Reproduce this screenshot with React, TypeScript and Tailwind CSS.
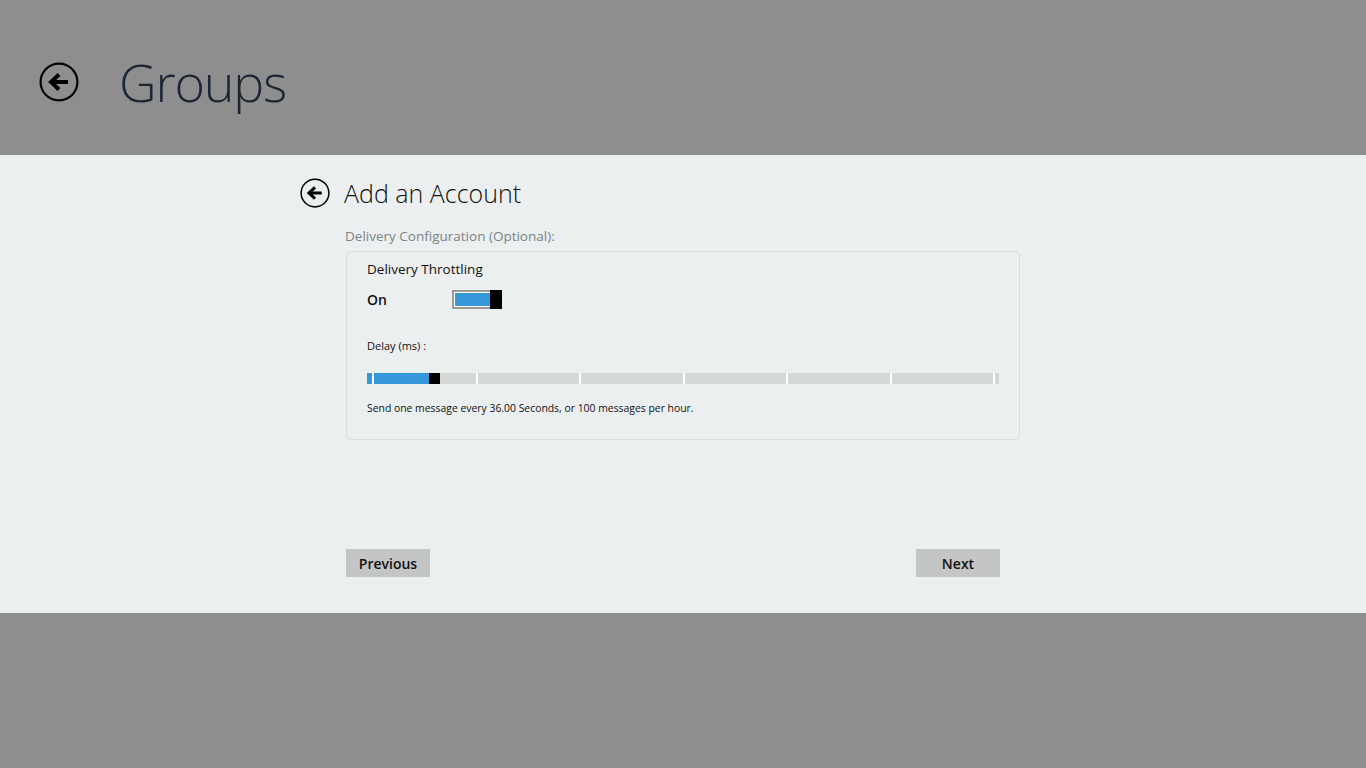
import React from "react";

function BackIcon({ size, stroke }: { size: number; stroke: number }) {
  return (
    <svg width={size} height={size} viewBox="0 0 40 40">
      <circle cx="20" cy="20" r={20 - stroke / 2 - 0.5} fill="none" stroke="#000" strokeWidth={stroke} />
      <path d="M29 20 H13" stroke="#000" strokeWidth="4" fill="none" />
      <path d="M20 12.5 L12 20 L20 27.5" stroke="#000" strokeWidth="4" fill="none" strokeLinejoin="miter" />
    </svg>
  );
}

export default function App() {
  const ticks = [5, 109, 212, 316, 419, 523, 626];
  return (
    <div className="w-[1366px] h-[768px] bg-[#8e8e8e] flex flex-col" style={{ fontFamily: '"Open Sans", "Noto Sans", sans-serif' }}>
      <div className="h-[155px] flex items-start pt-[62px] pl-[39px]">
        <BackIcon size={40} stroke={2.2} />
        <div className="ml-[40px] -mt-[16px] text-[52px] font-light text-[#1c2633] leading-[72px] tracking-[-1.2px]">Groups</div>
      </div>
      <div className="h-[458px] bg-[#ebeff0] flex flex-col pl-[300px]">
        <div className="flex items-center mt-[22px] h-[32px]">
          <BackIcon size={30} stroke={2} />
          <div className="ml-[14px] text-[25px] font-light text-[#111] leading-[32px]">Add an Account</div>
        </div>
        <div className="ml-[45px] mt-[18px] text-[13.5px] text-[#7b8486] leading-[18px]">Delivery Configuration (Optional):</div>
        <div className="ml-[46px] mt-[6px] w-[674px] h-[189px] border border-[#d8dcdd] rounded-[5px] pl-[20px] pt-[7px]">
          <div className="text-[13.5px] text-[#111] leading-[20px]">Delivery Throttling</div>
          <div className="flex items-center mt-[11px] h-[19px]">
            <div className="w-[85px] text-[14px] font-semibold text-[#111]">On</div>
            <div className="flex h-[19px] w-[50px]">
              <div className="flex-1 border-2 border-r-0 border-[#9b9b9b] bg-white pl-[1px] py-[1px]">
                <div className="h-full bg-[#3498db]" />
              </div>
              <div className="w-[12px] h-full bg-black" />
            </div>
          </div>
          <div className="mt-[29px] text-[11px] text-[#111] leading-[16px]">Delay (ms) :</div>
          <div className="relative mt-[19px] w-[632px] h-[11px] bg-[#d4d8d9]">
            <div className="absolute left-0 top-0 h-full w-[62px] bg-[#3498db]" />
            <div className="absolute left-[62px] top-0 h-full w-[11px] bg-black" />
            {ticks.map((t) => (
              <div key={t} className="absolute top-0 h-full w-[2px] bg-white" style={{ left: t }} />
            ))}
          </div>
          <div className="mt-[16px] text-[10.4px] text-[#111] leading-[16px]">Send one message every 36.00 Seconds, or 100 messages per hour.</div>
        </div>
        <div className="ml-[46px] mt-[109px] w-[654px] flex justify-between">
          <button className="w-[84px] h-[28px] bg-[#c4c5c6] text-[14px] font-semibold text-[#111]">Previous</button>
          <button className="w-[84px] h-[28px] bg-[#c4c5c6] text-[14px] font-semibold text-[#111]">Next</button>
        </div>
      </div>
      <div className="flex-1" />
    </div>
  );
}
